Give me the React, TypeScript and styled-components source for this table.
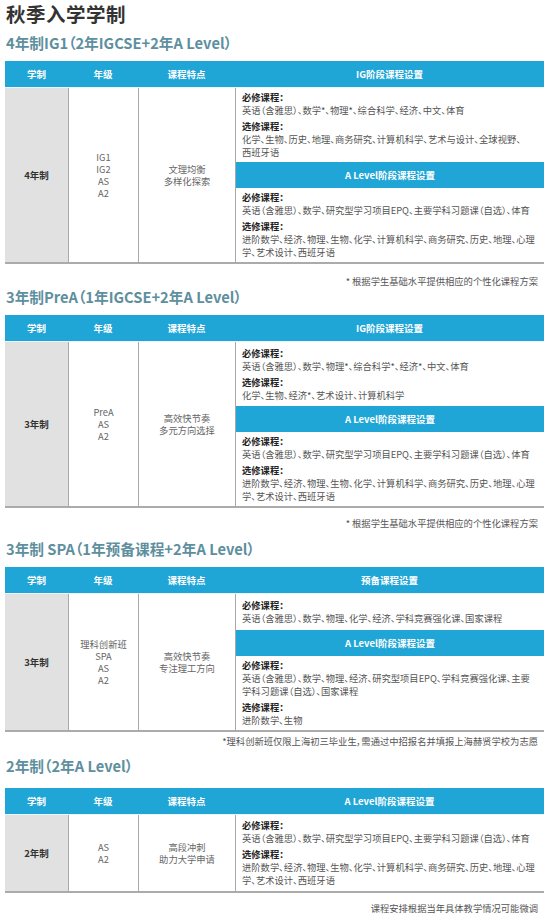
import React from "react";
import styled, { createGlobalStyle } from "styled-components";

const BLUE = "#1fa6d7";

const GlobalStyle = createGlobalStyle`
  body {
    margin: 0;
    background: #ffffff;
    font-family: "Noto Sans CJK SC", "Noto Sans", sans-serif;
  }
  * {
    box-sizing: border-box;
  }
`;

const Page = styled.div`
  width: 550px;
  padding: 0 6px 0 5px;
`;

const Title = styled.h1`
  margin: 0 0 0 1px;
  font-size: 19.5px;
  line-height: 28px;
  font-weight: 700;
  color: #333333;
  letter-spacing: 0.5px;
`;

const Subtitle = styled.h2<{ $mt: number; $mb: number }>`
  margin: ${(p) => p.$mt}px 0 ${(p) => p.$mb}px 1px;
  font-size: 14.7px;
  line-height: 20px;
  font-weight: 700;
  color: #5e8f9e;
  font-feature-settings: "palt";
`;

const Table = styled.div`
  display: grid;
  grid-template-columns: 63px 70px 97px 1fr;
  width: 539px;
`;

const HeadCell = styled.div`
  height: 27px;
  background: ${BLUE};
  color: #ffffff;
  font-size: 9.5px;
  font-weight: 700;
  display: flex;
  align-items: center;
  justify-content: center;
  border-bottom: 1px solid #e8f6fb;
`;

const BodyCell = styled.div<{ $tone?: "gray" | "plain"; $divider?: boolean }>`
  background: ${(p) => (p.$tone === "gray" ? "#e1e1e1" : "#ffffff")};
  border-left: ${(p) => (p.$divider ? "1px solid #a9a9a9" : "none")};
  border-bottom: 2px solid #ababab;
  display: flex;
  flex-direction: column;
  align-items: center;
  justify-content: center;
  text-align: center;
`;

const SchoolText = styled.div`
  font-size: 9.5px;
  font-weight: 700;
  color: #333333;
`;

const CenterLines = styled.div`
  font-size: 9.3px;
  line-height: 12px;
  color: #666666;
  span {
    display: block;
  }
`;

const CourseCell = styled.div`
  border-left: 1px solid #a9a9a9;
  border-bottom: 2px solid #ababab;
  display: flex;
  flex-direction: column;
`;

const CourseBlock = styled.div<{ $extra: number }>`
  padding: ${(p) => 3 + p.$extra}px 6px ${(p) => 3 + p.$extra}px 6px;
  font-size: 9.3px;
  line-height: 13px;
  color: #555555;
  font-feature-settings: "palt";
  white-space: nowrap;
`;

const Label = styled.div<{ $gap?: boolean }>`
  font-weight: 700;
  color: #222222;
  margin-top: ${(p) => (p.$gap ? 3 : 0)}px;
`;

const Line = styled.div``;

const StageBar = styled.div`
  height: 26px;
  background: ${BLUE};
  color: #ffffff;
  font-size: 9.5px;
  font-weight: 700;
  display: flex;
  align-items: center;
  justify-content: center;
`;

const Footnote = styled.div<{ $mt: number }>`
  margin-top: ${(p) => p.$mt}px;
  padding-right: 6px;
  text-align: right;
  font-size: 9.3px;
  line-height: 12px;
  color: #555555;
  font-feature-settings: "palt";
`;

type Group = { label: string; lines: string[] };
type Stage = { bar?: string; extra?: number; groups: Group[] };
type Section = {
  title: string;
  mt: number;
  mb: number;
  school: string;
  grades: string[];
  feature: string[];
  head: string;
  stages: Stage[];
  note: string;
  noteMt: number;
};

const aLevel: Group[] = [
  {
    label: "必修课程：",
    lines: ["英语（含雅思）、数学、研究型学习项目EPQ、主要学科习题课（自选）、体育"],
  },
  {
    label: "选修课程：",
    lines: [
      "进阶数学、经济、物理、生物、化学、计算机科学、商务研究、历史、地理、心理",
      "学、艺术设计、西班牙语",
    ],
  },
];

const sections: Section[] = [
  {
    title: "4年制IG1（2年IGCSE+2年A Level）",
    mt: 5,
    mb: 8,
    school: "4年制",
    grades: ["IG1", "IG2", "AS", "A2"],
    feature: ["文理均衡", "多样化探索"],
    head: "IG阶段课程设置",
    stages: [
      {
        groups: [
          { label: "必修课程：", lines: ["英语（含雅思）、数学*、物理*、综合科学、经济、中文、体育"] },
          {
            label: "选修课程：",
            lines: ["化学、生物、历史、地理、商务研究、计算机科学、艺术与设计、全球视野、", "西班牙语"],
          },
        ],
      },
      { bar: "A Level阶段课程设置", groups: aLevel },
    ],
    note: "* 根据学生基础水平提供相应的个性化课程方案",
    noteMt: 11,
  },
  {
    title: "3年制PreA（1年IGCSE+2年A Level）",
    mt: 0,
    mb: 8,
    school: "3年制",
    grades: ["PreA", "AS", "A2"],
    feature: ["高效快节奏", "多元方向选择"],
    head: "IG阶段课程设置",
    stages: [
      {
        extra: 1.5,
        groups: [
          { label: "必修课程：", lines: ["英语（含雅思）、数学、物理*、综合科学*、经济*、中文、体育"] },
          { label: "选修课程：", lines: ["化学、生物、经济*、艺术设计、计算机科学"] },
        ],
      },
      { bar: "A Level阶段课程设置", groups: aLevel },
    ],
    note: "* 根据学生基础水平提供相应的个性化课程方案",
    noteMt: 9,
  },
  {
    title: "3年制 SPA（1年预备课程+2年A Level）",
    mt: 10,
    mb: 8,
    school: "3年制",
    grades: ["理科创新班", "SPA", "AS", "A2"],
    feature: ["高效快节奏", "专注理工方向"],
    head: "预备课程设置",
    stages: [
      {
        extra: 2,
        groups: [
          {
            label: "必修课程：",
            lines: ["英语（含雅思）、数学、物理、化学、经济、学科竞赛强化课、国家课程"],
          },
        ],
      },
      {
        bar: "A Level阶段课程设置",
        groups: [
          {
            label: "必修课程：",
            lines: [
              "英语（含雅思）、数学、物理、经济、研究型项目EPQ、学科竞赛强化课、主要",
              "学科习题课（自选）、国家课程",
            ],
          },
          { label: "选修课程：", lines: ["进阶数学、生物"] },
        ],
      },
    ],
    note: "*理科创新班仅限上海初三毕业生，需通过中招报名并填报上海赫贤学校为志愿",
    noteMt: 3,
  },
  {
    title: "2年制（2年A Level）",
    mt: 9,
    mb: 12,
    school: "2年制",
    grades: ["AS", "A2"],
    feature: ["高段冲刺", "助力大学申请"],
    head: "A Level阶段课程设置",
    stages: [{ extra: 1, groups: aLevel }],
    note: "课程安排根据当年具体教学情况可能微调",
    noteMt: 9,
  },
];

function CourseColumn({ stages }: { stages: Stage[] }) {
  return (
    <CourseCell>
      {stages.map((stage, i) => (
        <React.Fragment key={i}>
          {stage.bar && <StageBar>{stage.bar}</StageBar>}
          <CourseBlock $extra={stage.extra ?? 0}>
            {stage.groups.map((g, j) => (
              <React.Fragment key={j}>
                <Label $gap={j > 0}>{g.label}</Label>
                {g.lines.map((l, k) => (
                  <Line key={k}>{l}</Line>
                ))}
              </React.Fragment>
            ))}
          </CourseBlock>
        </React.Fragment>
      ))}
    </CourseCell>
  );
}

function ProgramSection({ s }: { s: Section }) {
  return (
    <section>
      <Subtitle $mt={s.mt} $mb={s.mb}>
        {s.title}
      </Subtitle>
      <Table>
        <HeadCell>学制</HeadCell>
        <HeadCell>年级</HeadCell>
        <HeadCell>课程特点</HeadCell>
        <HeadCell>{s.head}</HeadCell>
        <BodyCell $tone="gray">
          <SchoolText>{s.school}</SchoolText>
        </BodyCell>
        <BodyCell $divider>
          <CenterLines>
            {s.grades.map((g) => (
              <span key={g}>{g}</span>
            ))}
          </CenterLines>
        </BodyCell>
        <BodyCell $divider>
          <CenterLines>
            {s.feature.map((f) => (
              <span key={f}>{f}</span>
            ))}
          </CenterLines>
        </BodyCell>
        <CourseColumn stages={s.stages} />
      </Table>
      <Footnote $mt={s.noteMt}>{s.note}</Footnote>
    </section>
  );
}

export default function App() {
  return (
    <>
      <GlobalStyle />
      <Page>
        <Title>秋季入学学制</Title>
        {sections.map((s) => (
          <ProgramSection key={s.title} s={s} />
        ))}
      </Page>
    </>
  );
}
